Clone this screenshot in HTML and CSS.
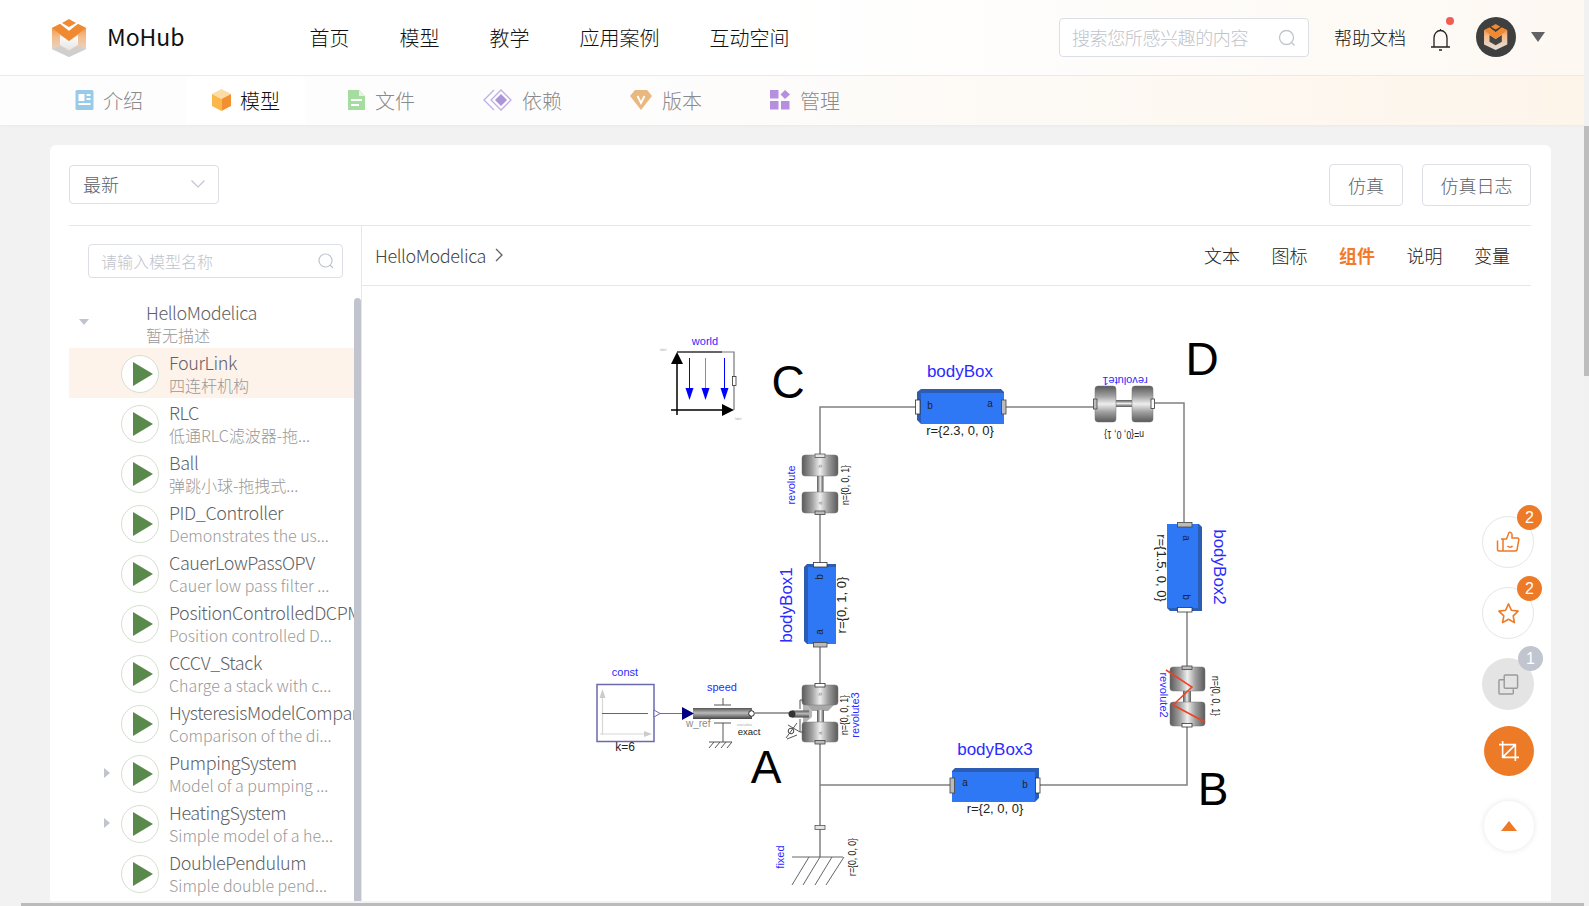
FILE: index.html
```html
<!DOCTYPE html>
<html lang="zh-CN">
<head>
<meta charset="utf-8">
<title>MoHub</title>
<link rel="stylesheet" href="styles.css">
</head>
<body>
<div class="page">
  <header class="topbar">
    <svg class="logo" viewBox="52 17 35 38" width="35" height="38">
      <defs>
        <linearGradient id="lgL" x1="0" y1="0" x2="0" y2="1"><stop offset="0" stop-color="#f08a32"/><stop offset=".4" stop-color="#f4bd8e"/><stop offset="1" stop-color="#e0e0e0"/></linearGradient>
        <linearGradient id="lgC" x1="0" y1="0" x2="0" y2="1"><stop offset="0" stop-color="#fdfdfd"/><stop offset="1" stop-color="#e6e6e6"/></linearGradient>
      </defs>
      <polygon points="69,17 76,21 69,25 62,21" fill="#f08a32"/>
      <polygon points="52,26 60,22 69,29 78,22 86,26 86,47 69,55 52,47" fill="url(#lgL)"/>
      <polygon points="60,33 69,39 78,33 78,43 69,48 60,43" fill="url(#lgC)"/>
      <polygon points="52,26 60,22 69,29 78,22 86,26 69,39" fill="#f08a32"/>
      <polygon points="60,44 69,49 78,44 86,47 69,55 52,47" fill="#cfcfcf"/>
    </svg>
    <span class="brand">MoHub</span>
    <nav class="mainnav">
      <a>首页</a><a>模型</a><a>教学</a><a>应用案例</a><a>互动空间</a>
    </nav>
    <div class="topsearch">
      <span class="placeholder">搜索您所感兴趣的内容</span>
      <svg class="search-ic" viewBox="0 0 18 18" width="18" height="18"><circle cx="8.5" cy="8.5" r="7" fill="none" stroke="#c0c4cc" stroke-width="1.3"/><path d="M13.5 13.5l3 3" stroke="#c0c4cc" stroke-width="1.3"/></svg>
    </div>
    <a class="help">帮助文档</a>
    <div class="bell">
      <svg viewBox="0 0 21 24" width="21" height="24"><path d="M1 20h19M4 20V11a6.5 7.5 0 0 1 13 0v9M10.500 3.500V2M9 23h3" fill="none" stroke="#222" stroke-width="1.300"/></svg>
      <i class="bell-dot"></i>
    </div>
    <div class="avatar">
      <svg viewBox="52 17 35 38" width="24" height="26">
        <polygon points="69,17 76,21 69,25 62,21" fill="#f08a32"/>
        <polygon points="52,26 60,22 69,29 78,22 86,26 86,47 69,55 52,47" fill="url(#lgL)"/>
        <polygon points="60,33 69,39 78,33 78,43 69,48 60,43" fill="#444"/>
        <polygon points="52,26 60,22 69,29 78,22 86,26 69,39" fill="#f08a32"/>
      </svg>
    </div>
    <i class="caret"></i>
  </header>

  <div class="tabbar">
    <a class="tab tab-first">
      <svg class="tab-ic" viewBox="0 0 18 20" width="19" height="20"><rect width="18" height="20" rx="1.500" fill="#98cbea"/><rect x="3" y="4" width="6" height="7" fill="#fff"/><path d="M11 5h4M11 9h4M3 14h12" stroke="#fff" stroke-width="1.800"/></svg>
      介绍
    </a>
    <a class="tab tab-on">
      <svg class="tab-ic" viewBox="0 0 19 22" width="19" height="22"><polygon points="9.500,0 19,5 9.500,10 0,5" fill="#fbdca5"/><polygon points="0,5 9.500,10 9.500,22 0,17" fill="#fbb74a"/><polygon points="19,5 9.500,10 9.500,22 19,17" fill="#f29030"/></svg>
      模型
    </a>
    <a class="tab">
      <svg class="tab-ic" viewBox="0 0 17 20" width="17" height="20"><path d="M0 0h11l6 6v14H0z" fill="#a5dca0"/><path d="M11 0l6 6h-6z" fill="#e4f5e2"/><path d="M3 10h11M3 15h8" stroke="#fff" stroke-width="1.800"/></svg>
      文件
    </a>
    <a class="tab">
      <svg class="tab-ic" viewBox="0 0 29 22" width="29" height="22"><path d="M11 1L1 11l10 10M18 1L8 11l10 10L28 11z" fill="none" stroke="#c0aee6" stroke-width="1.300"/><polygon points="18,5 24,11 18,17 12,11" fill="#ac94d8"/></svg>
      依赖
    </a>
    <a class="tab">
      <svg class="tab-ic" viewBox="0 0 22 20" width="22" height="20"><polygon points="5,0 17,0 22,6 11,20 0,6" fill="#e8b87f"/><path d="M7.500 6l3.500 7 3.500-7" fill="none" stroke="#fff" stroke-width="1.800"/></svg>
      版本
    </a>
    <a class="tab">
      <svg class="tab-ic" viewBox="0 0 20 20" width="20" height="20"><rect width="8.500" height="8.500" fill="#b78fe0"/><rect y="11" width="8.500" height="8.500" fill="#b78fe0"/><rect x="11" y="11" width="8.500" height="8.500" fill="#b78fe0"/><polygon points="15,0 20,4.500 15,9 10.500,4.500" fill="#b78fe0"/></svg>
      管理
    </a>
  </div>

  <main class="content">
    <section class="card">
      <div class="toolbar">
        <div class="select">
          <span>最新</span>
          <svg viewBox="0 0 14 8" width="14" height="8"><path d="M.5.500L7 7l6.500-6.500" fill="none" stroke="#c0c4cc" stroke-width="1.200"/></svg>
        </div>
        <div class="toolbtns">
          <button class="btn btn-sim">仿真</button>
          <button class="btn btn-log">仿真日志</button>
        </div>
      </div>

      <div class="split">
        <aside class="side">
          <div class="modelsearch">
            <span class="placeholder-sm">请输入模型名称</span>
            <svg viewBox="0 0 16 16" width="16" height="16"><circle cx="7.500" cy="7.500" r="6.500" fill="none" stroke="#c0c4cc" stroke-width="1.200"/><path d="M12 12l3 3" stroke="#c0c4cc" stroke-width="1.200"/></svg>
          </div>
          <div class="treewrap">
            <ul class="tree">
              <li class="node node-root">
                <i class="arrow-down"></i>
                <div class="node-text"><div class="node-title">HelloModelica</div><div class="node-sub">暂无描述</div></div>
              </li>
              <li class="node node-sel">
                <span class="arrow-slot"></span><span class="play"><i></i></span>
                <div class="node-text"><div class="node-title">FourLink</div><div class="node-sub">四连杆机构</div></div>
              </li>
              <li class="node">
                <span class="arrow-slot"></span><span class="play"><i></i></span>
                <div class="node-text"><div class="node-title">RLC</div><div class="node-sub">低通RLC滤波器-拖...</div></div>
              </li>
              <li class="node">
                <span class="arrow-slot"></span><span class="play"><i></i></span>
                <div class="node-text"><div class="node-title">Ball</div><div class="node-sub">弹跳小球-拖拽式...</div></div>
              </li>
              <li class="node">
                <span class="arrow-slot"></span><span class="play"><i></i></span>
                <div class="node-text"><div class="node-title">PID_Controller</div><div class="node-sub">Demonstrates the us...</div></div>
              </li>
              <li class="node">
                <span class="arrow-slot"></span><span class="play"><i></i></span>
                <div class="node-text"><div class="node-title">CauerLowPassOPV</div><div class="node-sub">Cauer low pass filter ...</div></div>
              </li>
              <li class="node">
                <span class="arrow-slot"></span><span class="play"><i></i></span>
                <div class="node-text"><div class="node-title">PositionControlledDCPM</div><div class="node-sub">Position controlled D...</div></div>
              </li>
              <li class="node">
                <span class="arrow-slot"></span><span class="play"><i></i></span>
                <div class="node-text"><div class="node-title">CCCV_Stack</div><div class="node-sub">Charge a stack with c...</div></div>
              </li>
              <li class="node">
                <span class="arrow-slot"></span><span class="play"><i></i></span>
                <div class="node-text"><div class="node-title">HysteresisModelComparison</div><div class="node-sub">Comparison of the di...</div></div>
              </li>
              <li class="node">
                <span class="arrow-slot"><i class="arrow-right"></i></span><span class="play"><i></i></span>
                <div class="node-text"><div class="node-title">PumpingSystem</div><div class="node-sub">Model of a pumping ...</div></div>
              </li>
              <li class="node">
                <span class="arrow-slot"><i class="arrow-right"></i></span><span class="play"><i></i></span>
                <div class="node-text"><div class="node-title">HeatingSystem</div><div class="node-sub">Simple model of a he...</div></div>
              </li>
              <li class="node">
                <span class="arrow-slot"></span><span class="play"><i></i></span>
                <div class="node-text"><div class="node-title">DoublePendulum</div><div class="node-sub">Simple double pend...</div></div>
              </li>
            </ul>
            <div class="treethumb"></div>
          </div>
        </aside>

        <div class="viewer">
          <div class="viewbar">
            <div class="crumb">HelloModelica
              <svg viewBox="0 0 8 14" width="8" height="14"><path d="M1 1l6 6-6 6" fill="none" stroke="#606266" stroke-width="1.300"/></svg>
            </div>
            <div class="viewtabs"><a>文本</a><a>图标</a><a class="on">组件</a><a>说明</a><a>变量</a></div>
          </div>
          <div class="canvas">
            <svg class="diagram" viewBox="362 286 1169 615" width="1169" height="615">
              <defs>
                <linearGradient id="wh" x1="0" y1="0" x2="1" y2="0"><stop offset="0" stop-color="#5a5a5a"/><stop offset=".28" stop-color="#a0a0a0"/><stop offset=".5" stop-color="#eeeeee"/><stop offset=".72" stop-color="#a0a0a0"/><stop offset="1" stop-color="#5a5a5a"/></linearGradient>
                <linearGradient id="wv" x1="0" y1="0" x2="0" y2="1"><stop offset="0" stop-color="#5a5a5a"/><stop offset=".28" stop-color="#a0a0a0"/><stop offset=".5" stop-color="#eeeeee"/><stop offset=".72" stop-color="#a0a0a0"/><stop offset="1" stop-color="#5a5a5a"/></linearGradient>
                <linearGradient id="cyl" x1="0" y1="0" x2="0" y2="1"><stop offset="0" stop-color="#555"/><stop offset=".45" stop-color="#bbb"/><stop offset="1" stop-color="#444"/></linearGradient>
              </defs>

              <!-- wires -->
              <g class="wire">
                <path d="M916 407H820V455"/>
                <path d="M820 513V563"/>
                <path d="M820 647V684"/>
                <path d="M1006 407H1094"/>
                <path d="M1155 403H1184V522"/>
                <path d="M1187 612V667"/>
                <path d="M1187 727V785H1040"/>
                <path d="M950 785H820"/>
                <path d="M820 743V857"/>
                <path d="M755 713H790" />
              </g>

              <!-- world -->
              <text class="t-blue t11" x="705" y="345" text-anchor="middle">world</text>
              <path d="M677 352H734V410" fill="none" stroke="#777" stroke-width="1.200"/>
              <path d="M677 352H722" stroke="#111" stroke-width="1.200"/>
              <path d="M677 356V415M671 410H724" stroke="#000" stroke-width="1.500" fill="none"/>
              <polygon points="677,352 683,364 671,364" fill="#000"/>
              <polygon points="734,410 722,404 722,416" fill="#000"/>
              <path d="M689.500 358V390M724.500 358V390" stroke="#0000ff" stroke-width="1"/>
              <path d="M705.500 358V390" stroke="#8080ff" stroke-width="1"/>
              <polygon points="685.500,388 693.500,388 689.500,400" fill="#0000ff"/>
              <polygon points="701.500,388 709.500,388 705.500,400" fill="#0000ff"/>
              <polygon points="720.500,388 728.500,388 724.500,400" fill="#0000ff"/>
              <rect class="port-w" x="732.500" y="376.500" width="3.500" height="9"/>
              <text class="t-tiny" x="660" y="351" text-anchor="start">label</text>
              <text class="t-tiny" x="735" y="420" text-anchor="start">label</text>

              <!-- corner letters -->
              <text class="t-big" x="788" y="398" text-anchor="middle">C</text>
              <text class="t-big" x="1202" y="375" text-anchor="middle">D</text>
              <text class="t-big" x="766" y="783" text-anchor="middle">A</text>
              <text class="t-big" x="1213" y="805" text-anchor="middle">B</text>

              <!-- revolute -->
              <rect class="shaft-h" x="817" y="476" width="6.500" height="16"/>
              <rect class="wheel-h" x="802" y="455" width="36" height="21" rx="3"/>
              <rect class="wheel-h" x="802" y="492" width="36" height="21" rx="3"/>
              <rect class="port-g2" x="815" y="454" width="10" height="3.500"/>
              <rect class="port-g" x="815" y="511" width="10" height="3.500"/>
              <text class="t-gray t6" transform="translate(822,466) rotate(-90)" text-anchor="middle">b</text>
              <text class="t-gray t6" transform="translate(822,503) rotate(-90)" text-anchor="middle">a</text>
              <text class="t-blue t11" transform="translate(795,485) rotate(-90)" text-anchor="middle">revolute</text>
              <text class="t-black t-n" textLength="40" lengthAdjust="spacingAndGlyphs" transform="translate(849,485) rotate(-90)" text-anchor="middle">n={0, 0, 1}</text>

              <!-- bodyBox -->
              <polygon points="917,392 921,389 1001,389 1004,392 1004,424 921,424 917,420" fill="#2c5db5"/>
              <rect class="body-fill" x="921" y="393" width="83" height="31"/>
              <rect class="port-w" x="915.500" y="400" width="4.500" height="14"/>
              <rect class="port-g" x="1001.500" y="400" width="4.500" height="14"/>
              <text class="t-black t10" x="930" y="409" text-anchor="middle">b</text>
              <text class="t-black t10" x="990" y="407" text-anchor="middle">a</text>
              <text class="t-blue t17" x="960" y="377" text-anchor="middle">bodyBox</text>
              <text class="t-black t13" x="960" y="435" text-anchor="middle">r={2.3, 0, 0}</text>

              <!-- revolute1 -->
              <rect class="shaft-v" x="1116" y="400" width="16" height="7"/>
              <rect class="wheel-v" x="1095" y="386" width="21" height="36" rx="3"/>
              <rect class="wheel-v" x="1132" y="386" width="21" height="36" rx="3"/>
              <rect class="port-g" x="1093.500" y="399" width="3.500" height="10"/>
              <rect class="port-w" x="1151" y="399" width="3.500" height="9.500"/>
              <text class="t-blue t11" transform="translate(1125,377) rotate(180)" text-anchor="middle">revolute1</text>
              <text class="t-black t-n" textLength="40" lengthAdjust="spacingAndGlyphs" transform="translate(1124,431) rotate(180)" text-anchor="middle">n={0, 0, 1}</text>

              <!-- bodyBox2 -->
              <polygon points="1167,524 1199,524 1202,527 1202,611 1170,611 1167,608" fill="#2c5db5"/>
              <rect class="body-fill" x="1167" y="524" width="31" height="84"/>
              <rect class="port-g" x="1177.500" y="522.500" width="14.500" height="4.500"/>
              <rect class="port-w" x="1177.500" y="607.500" width="14.500" height="4.500"/>
              <text class="t-black t10" transform="translate(1183,538) rotate(90)" text-anchor="middle">a</text>
              <text class="t-black t10" transform="translate(1183,597) rotate(90)" text-anchor="middle">b</text>
              <text class="t-blue t17" transform="translate(1214,567) rotate(90)" text-anchor="middle">bodyBox2</text>
              <text class="t-black t13" transform="translate(1157,568) rotate(90)" text-anchor="middle">r={1.5, 0, 0}</text>

              <!-- revolute2 -->
              <rect class="shaft-h" x="1183" y="691" width="8" height="11"/>
              <rect class="wheel-h" x="1170" y="667" width="35" height="24" rx="3"/>
              <rect class="wheel-h" x="1170" y="702" width="35" height="24" rx="3"/>
              <rect class="port-g" x="1182" y="666" width="10" height="3.500"/>
              <rect class="port-w" x="1182" y="723.500" width="10" height="3.500"/>
              <path d="M1166 670L1192 687L1173 705L1205 722" fill="none" stroke="#f04020" stroke-width="1.500"/>
              <text class="t-blue t11" transform="translate(1160,695) rotate(90)" text-anchor="middle">revolute2</text>
              <text class="t-black t-n" textLength="40" lengthAdjust="spacingAndGlyphs" transform="translate(1212,696) rotate(90)" text-anchor="middle">n={0, 0, 1}</text>

              <!-- bodyBox3 -->
              <polygon points="952,771 955,768 1039,768 1039,798 1035,802 952,802" fill="#2c5db5"/>
              <rect class="body-fill" x="952" y="772" width="83" height="30"/>
              <rect class="port-g" x="950" y="778" width="4.500" height="15"/>
              <rect class="port-w" x="1035.500" y="778" width="4.500" height="15"/>
              <text class="t-black t10" x="965" y="786" text-anchor="middle">a</text>
              <text class="t-black t10" x="1025" y="788" text-anchor="middle">b</text>
              <text class="t-blue t17" x="995" y="755" text-anchor="middle">bodyBox3</text>
              <text class="t-black t13" x="995" y="813" text-anchor="middle">r={2, 0, 0}</text>

              <!-- bodyBox1 -->
              <polygon points="804,567 807,564 836,564 836,644 807,644 804,641" fill="#2c5db5"/>
              <rect class="body-fill" x="808" y="567" width="28" height="77"/>
              <rect class="port-w" x="813.500" y="562.500" width="13.500" height="4.500"/>
              <rect class="port-g" x="813.500" y="642.500" width="13.500" height="4.500"/>
              <text class="t-black t10" transform="translate(823,577) rotate(-90)" text-anchor="middle">b</text>
              <text class="t-black t10" transform="translate(823,632) rotate(-90)" text-anchor="middle">a</text>
              <text class="t-blue t17" transform="translate(792,605) rotate(-90)" text-anchor="middle">bodyBox1</text>
              <text class="t-black t13" transform="translate(846,605) rotate(-90)" text-anchor="middle">r={0, 1, 0}</text>

              <!-- revolute3 -->
              <polygon points="805,704 835,704 828,711 812,711" fill="#a8a8a8"/>
              <rect class="shaft-h" x="817" y="710" width="7" height="12"/>
              <polygon points="812,711 812,717 806,722 803,722 803,704 805,704" fill="#b5b5b5"/>
              <rect class="wheel-h" x="802" y="685" width="36" height="20" rx="3"/>
              <rect class="wheel-h" x="802" y="722" width="36" height="20" rx="3"/>
              <rect x="792" y="710.500" width="17" height="7" fill="url(#cyl)"/>
              <circle cx="792" cy="714" r="3.500" fill="#333"/>
              <path d="M800 709V700H804M800 719V732H804" fill="none" stroke="#555" stroke-width="1"/>
              <circle cx="791" cy="731" r="2.800" fill="#fff" stroke="#444"/>
              <path d="M786 738L797 723M788 725L800 732M787 739L797 735" fill="none" stroke="#555" stroke-width="1"/>
              <rect class="port-w" x="815" y="683.500" width="10" height="3.500"/>
              <rect class="port-g" x="815" y="740.500" width="10" height="3.500"/>
              <text class="t-gray t6" transform="translate(822,694) rotate(-90)" text-anchor="middle">b</text>
              <text class="t-gray t6" transform="translate(822,733) rotate(-90)" text-anchor="middle">a</text>
              <text class="t-black t-n" textLength="40" lengthAdjust="spacingAndGlyphs" transform="translate(848,715) rotate(-90)" text-anchor="middle">n={0, 0, 1}</text>
              <text class="t-blue t11" transform="translate(859,715) rotate(-90)" text-anchor="middle">revolute3</text>

              <!-- const -->
              <text class="t-blue t11" x="625" y="676" text-anchor="middle">const</text>
              <rect x="597" y="684.500" width="57" height="57" fill="#fff" stroke="#6a6ab0" stroke-width="1.500"/>
              <path d="M602.500 698V735M600 734H646" stroke="#d8d8d8" stroke-width="1.200"/>
              <polygon points="602.500,689 605.500,698 599.500,698" fill="#ccc"/>
              <polygon points="652,734 644,731 644,737" fill="#ccc"/>
              <path d="M602 713.500H648" stroke="#666" stroke-width="1"/>
              <polygon points="654,710 660,713.500 654,717" fill="#fff" stroke="#6a6ab0"/>
              <path d="M660 713.500H684" stroke="#6a6ab0" stroke-width="1"/>
              <text class="t-black t12" x="625" y="751" text-anchor="middle">k=6</text>

              <!-- speed -->
              <text class="t-blue t11" x="722" y="691" text-anchor="middle">speed</text>
              <path d="M723 698V705M714 705H731M714 723H731M723 723V742M709 748L714 742M715 748L720 742M721 748L726 742M727 748L732 742M709 742H732" fill="none" stroke="#555" stroke-width="1"/>
              <rect x="693" y="708" width="59" height="11" fill="url(#cyl)"/>
              <polygon points="682,707 694,713.500 682,720" fill="#000080"/>
              <circle cx="751.500" cy="713.500" r="2.800" fill="#fff" stroke="#222"/>
              <text class="t-gray t10" x="686" y="727">w_ref</text>
              <text class="t-tiny" x="737" y="726">exact=false</text>
              <text class="t-black t9" x="749" y="735" text-anchor="middle">exact</text>

              <!-- fixed -->
              <rect class="port-g2" x="815" y="825.500" width="10" height="4"/>
              <path d="M792 857H843M809 857L792 885M820 857L803 885M832 857L815 885M844 857L826 885" fill="none" stroke="#666" stroke-width="1"/>
              <text class="t-blue t11" transform="translate(784,857) rotate(-90)" text-anchor="middle">fixed</text>
              <text class="t-black t-n" textLength="38" lengthAdjust="spacingAndGlyphs" transform="translate(856,857) rotate(-90)" text-anchor="middle">r={0, 0, 0}</text>
            </svg>
          </div>
        </div>
      </div>
    </section>
  </main>

  <div class="floaters">
    <button class="fab fab-line">
      <svg viewBox="0 0 24 22" width="24" height="22"><path d="M5 8h2M7 20H3a1.500 1.500 0 0 1-1.500-1.500V9.500M7 8h3.500L13 1.500c1.500-.5 3 .5 3 2V7h5.500c1 0 1.500 1 1.300 2l-1.800 10c-.2 1-1 1-2 1H7z" fill="none" stroke="#ed7a26" stroke-width="1.500"/><path d="M11 11.500h.01M17 11.500h.01M11.500 15c1.500 1.500 4 1.500 5 0" fill="none" stroke="#ed7a26" stroke-width="1.500"/></svg>
      <span class="fab-badge">2</span>
    </button>
    <button class="fab fab-line">
      <svg viewBox="0 0 24 24" width="23" height="23"><path d="M12 2l3 6.600 7 .9-5.100 4.900 1.300 7.100L12 18l-6.200 3.500 1.300-7.100L2 9.500l7-.9z" fill="none" stroke="#ed7a26" stroke-width="1.700" stroke-linejoin="round"/></svg>
      <span class="fab-badge">2</span>
    </button>
    <button class="fab fab-gray">
      <svg viewBox="0 0 22 22" width="21" height="21"><rect x="6.500" y="1" width="14" height="14" rx="1" fill="none" stroke="#9a9a9a" stroke-width="1.500"/><path d="M6.500 6H2a1 1 0 0 0-1 1v13a1 1 0 0 0 1 1h13a1 1 0 0 0 1-1v-4" fill="none" stroke="#9a9a9a" stroke-width="1.500"/></svg>
      <span class="fab-badge fab-badge-gray">1</span>
    </button>
    <button class="fab fab-orange">
      <svg viewBox="0 0 22 22" width="20" height="20"><path d="M4 0v18h18M0 4h18v18M4 18L18 4" fill="none" stroke="#fff" stroke-width="1.800"/></svg>
    </button>
    <button class="fab fab-up"><i class="up-tri"></i></button>
  </div>
</div>
<div class="vtrack"><div class="vthumb"></div></div>
<div class="htrack"><div class="hthumb"></div></div>
</body>
</html>
```

FILE: styles.css
```css
* { box-sizing: border-box; }
html, body { margin: 0; padding: 0; }
body {
  width: 1589px;
  height: 906px;
  overflow: hidden;
  display: grid;
  grid-template-columns: 1584px 5px;
  grid-template-rows: 903px 3px;
  background: #f2f2f2;
  font-family: "Noto Sans CJK SC", "Open Sans", sans-serif;
  font-weight: 300;
  color: #303133;
}
a { color: inherit; text-decoration: none; }
ul { list-style: none; margin: 0; padding: 0; }
i { display: block; font-style: normal; }

.page { position: relative; display: flex; flex-direction: column; height: 903px; overflow: hidden; }

/* top bar */
.topbar {
  flex: none;
  height: 76px;
  display: flex;
  align-items: center;
  padding: 0 39px 0 52px;
  background: linear-gradient(90deg, #fff 50%, #fdf8f2 100%);
  border-bottom: 1px solid #ecebea;
}
.logo { flex: none; }
.brand { margin-left: 20px; padding-bottom: 2px; font-size: 23px; color: #111; font-weight: 400; line-height: 1; }
.mainnav { display: flex; gap: 50px; margin-left: 125px; font-size: 20px; color: #111; }
.topsearch {
  margin-left: auto;
  width: 250px;
  height: 39px;
  display: flex;
  align-items: center;
  justify-content: space-between;
  padding: 0 12px 0 12px;
  border: 1px solid #dcdfe6;
  border-radius: 4px;
  background: #fff;
}
.placeholder { font-size: 18px; letter-spacing: -.4px; color: #c0c4cc; white-space: nowrap; padding-bottom: 2px; }
.help { margin-left: 25px; font-size: 18px; color: #111; padding-bottom: 2px; }
.bell { position: relative; margin-left: 24px; width: 21px; height: 24px; margin-top: 2px; }
.bell svg { display: block; }
.bell-dot { position: absolute; top: -10px; right: -3px; width: 8px; height: 8px; border-radius: 50%; background: #f25c54; }
.avatar { margin-left: 25px; width: 40px; height: 40px; border-radius: 50%; background: #3f3f3f; display: flex; align-items: center; justify-content: center; margin-top: -1px; }
.caret { margin-left: 15px; width: 0; height: 0; border-left: 7.5px solid transparent; border-right: 7.5px solid transparent; border-top: 10px solid #606266; margin-top: -2px; }

/* tabs */
.tabbar {
  flex: none;
  height: 49px;
  display: flex;
  gap: 18px;
  padding-left: 50px;
  background: linear-gradient(90deg, #fdfdfd 40%, #fdf5ea 100%);
  box-shadow: 0 1px 3px rgba(0,0,0,.04);
}
.tab { display: flex; align-items: center; gap: 10px; padding: 0 25px 1px; font-size: 20px; color: #8a8a8a; }
.tab-ic { flex: none; }
.tab-first { gap: 9px; margin-right: 1px; }
.tab-on { background: #fff; color: #111; border-radius: 6px 6px 0 0; gap: 9px; }

/* content */
.content { flex: 1; min-height: 0; padding: 20px 33px 2px 50px; }
.card { height: 100%; background: #fff; border-radius: 6px 6px 0 0; padding: 19px 20px 0 19px; display: flex; flex-direction: column; }
.toolbar { flex: none; height: 61px; display: flex; justify-content: space-between; align-items: flex-start; }
.select { width: 150px; height: 39px; margin-top: 1px; display: flex; align-items: center; justify-content: space-between; padding: 0 13px 2px; border: 1px solid #dcdfe6; border-radius: 4px; font-size: 18px; color: #606266; }
.toolbtns { display: flex; gap: 19px; }
.btn { height: 42px; border: 1px solid #dcdfe6; border-radius: 4px; background: #fff; font: inherit; font-size: 18px; color: #606266; padding: 0; }
.btn-sim { width: 74px; }
.btn-log { width: 109px; }

.split { flex: 1; min-height: 0; display: flex; border-top: 1px solid #e4e7ed; }
.side { flex: none; width: 293px; border-right: 1px solid #e4e7ed; display: flex; flex-direction: column; }
.modelsearch { flex: none; margin: 18px 0 0 19px; width: 255px; height: 34px; display: flex; align-items: center; justify-content: space-between; padding: 0 8px 0 12px; border: 1px solid #dcdfe6; border-radius: 4px; }
.placeholder-sm { font-size: 16px; color: #c0c4cc; }
.treewrap { flex: 1; min-height: 0; margin-top: 20px; display: flex; }
.tree { flex: none; width: 285px; overflow: hidden; }
.treethumb { flex: none; width: 7px; background: #c1c4cc; border-radius: 4px 4px 0 0; }
.node { height: 50px; display: flex; padding-left: 34px; white-space: nowrap; }
.node-root { padding-left: 10px; }
.node-sel { background: #fdf3ea; }
.arrow-slot { flex: none; width: 18px; display: flex; align-items: center; }
.arrow-down { flex: none; width: 0; height: 0; margin-top: 21px; border-left: 5px solid transparent; border-right: 5px solid transparent; border-top: 6px solid #c0c4cc; }
.arrow-right { width: 0; height: 0; margin-left: 1px; border-top: 5px solid transparent; border-bottom: 5px solid transparent; border-left: 6px solid #c0c4cc; }
.play { flex: none; width: 38px; height: 38px; margin-top: 7px; border: 1px solid #d5e0cf; border-radius: 50%; background: #fff; display: flex; align-items: center; justify-content: center; }
.play i { width: 0; height: 0; margin-left: 5px; border-top: 12px solid transparent; border-bottom: 12px solid transparent; border-left: 20px solid #5a8a4b; }
.node-text { margin-left: 10px; padding-top: 2px; }
.node-root .node-text { margin-left: 57px; }
.node-title { font-size: 18px; line-height: 24px; letter-spacing: -.4px; color: #606266; }
.node-sub { font-size: 16px; line-height: 23px; color: #999; }

.viewer { flex: 1; min-width: 0; display: flex; flex-direction: column; }
.viewbar { flex: none; height: 60px; display: flex; align-items: center; justify-content: space-between; padding: 0 21px 2px 13px; border-bottom: 1px solid #e4e7ed; }
.crumb { display: flex; align-items: center; gap: 9px; font-size: 18px; letter-spacing: -.4px; color: #444; }
.viewtabs { display: flex; gap: 31.5px; font-size: 18px; color: #222; }
.viewtabs .on { color: #f47a2a; font-weight: 700; }
.canvas { flex: 1; min-height: 0; overflow: hidden; }
.diagram { display: block; }

/* diagram text */
.diagram text { font-family: "Liberation Sans", Arial, sans-serif; font-weight: 400; }
.t-blue { fill: #2a2aff; }
.t-black { fill: #222; }
.t-gray { fill: #8a8a8a; }
.t-big { font-size: 46px; fill: #000; }
.t-tiny { font-size: 3px; fill: #aaa; }
.t-n { font-size: 10.5px; }
.t6 { font-size: 6px; }
.t9 { font-size: 9.5px; }
.t10 { font-size: 10px; }
.t11 { font-size: 11px; }
.t12 { font-size: 12px; }
.t13 { font-size: 13px; }
.t17 { font-size: 17px; }
.wire path { fill: none; stroke: #808080; stroke-width: 1.500; }
.wheel-h { fill: url(#wh); stroke: #777; stroke-width: .5; }
.wheel-v { fill: url(#wv); stroke: #777; stroke-width: .5; }
.shaft-h { fill: url(#wh); }
.shaft-v { fill: url(#wv); }
.body-fill { fill: #2f78f5; }
.port-w { fill: #fff; stroke: #333; stroke-width: .8; }
.port-g { fill: #bbb; stroke: #444; stroke-width: .8; }
.port-g2 { fill: #e4e4e4; stroke: #555; stroke-width: .8; }

/* floating actions */
.floaters { position: absolute; left: 1478px; top: 516px; width: 60px; display: flex; flex-direction: column; align-items: center; }
.fab { position: relative; flex: none; width: 52px; height: 52px; padding: 0; border-radius: 50%; display: flex; align-items: center; justify-content: center; background: #fff; border: none; }
.fab-line { border: 1px solid #e6e6e6; margin-bottom: 19px; }
.fab-gray { background: #e4e4e4; margin-bottom: 16px; }
.fab-orange { background: #ed7a26; width: 50px; height: 50px; margin-bottom: 25px; margin-left: 2px; }
.fab-up { width: 50px; height: 50px; margin-left: 2px; box-shadow: 0 0 6px rgba(0,0,0,.1); }
.fab-badge { position: absolute; top: -12px; right: -9px; width: 25px; height: 25px; border-radius: 50%; background: #ed7a26; color: #fff; font-size: 16px; font-weight: 400; line-height: 25px; text-align: center; }
.fab-badge-gray { background: #c0c5d0; }
.up-tri { width: 0; height: 0; border-left: 8px solid transparent; border-right: 8px solid transparent; border-bottom: 10px solid #ed7a26; }

/* page scrollbars */
.vtrack { grid-column: 2; grid-row: 1 / span 2; background: #f1f1f1; padding-top: 126px; }
.vthumb { height: 250px; background: #bdbdbd; }
.htrack { grid-column: 1; grid-row: 2; padding-left: 21px; }
.hthumb { height: 3px; background: #bbb; }
```
